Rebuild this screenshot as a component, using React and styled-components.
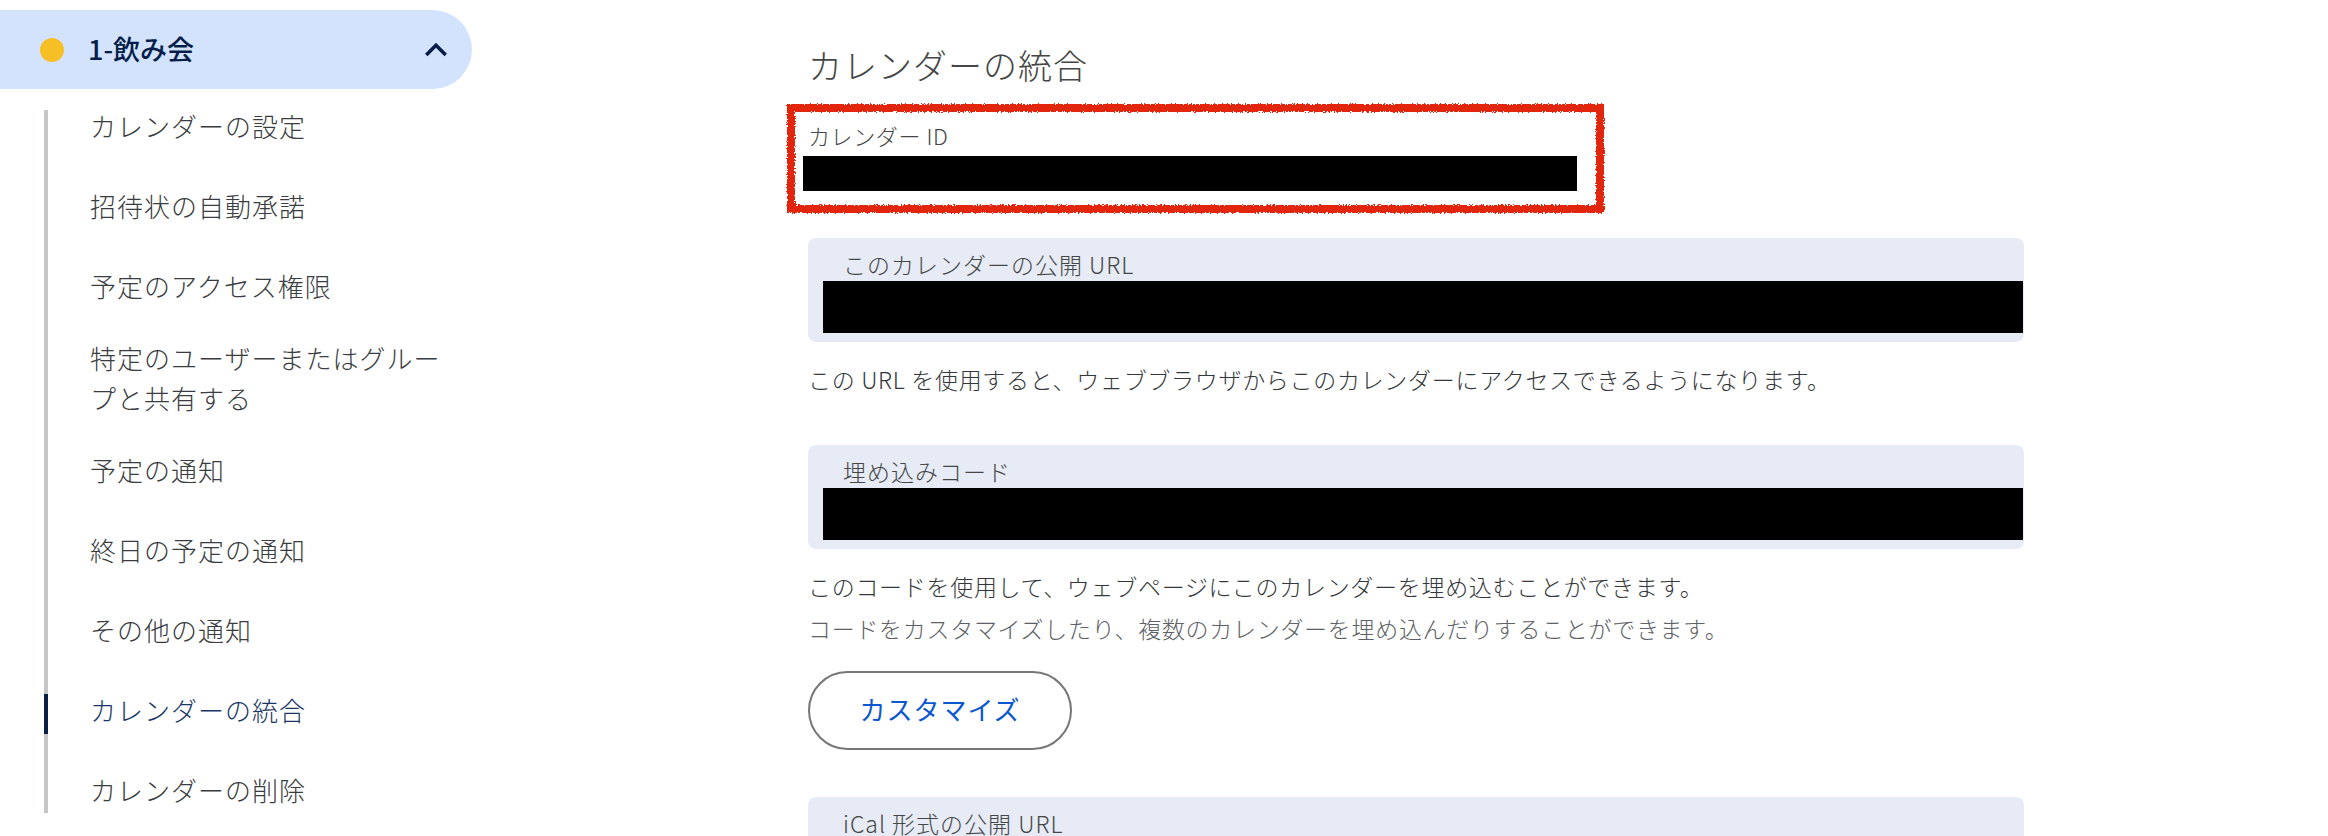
import React from "react";
import styled, { createGlobalStyle, css } from "styled-components";

const GlobalStyle = createGlobalStyle`
  html, body { margin: 0; padding: 0; background: #ffffff; overflow: hidden; }
  body {
    font-family: "Noto Sans CJK JP", "Noto Sans", sans-serif;
    -webkit-font-smoothing: antialiased;
  }
`;

const Page = styled.div`
  display: flex;
  align-items: flex-start;
  height: 836px;
  overflow: hidden;
`;

const Sidebar = styled.nav`
  width: 472px;
  flex-shrink: 0;
  padding-top: 10px;
  box-sizing: border-box;
`;

const CalendarPill = styled.div`
  height: 79px;
  display: flex;
  align-items: center;
  padding: 0 14px 2px 40px;
  background: #d3e3fd;
  border-radius: 0 40px 40px 0;
  box-sizing: border-box;
`;

const ColorDot = styled.span`
  width: 24px;
  height: 24px;
  margin-top: 2px;
  border-radius: 50%;
  background: ${(p) => p.$color};
  flex-shrink: 0;
`;

const PillTitle = styled.span`
  margin-left: 24px;
  flex: 1;
  font-size: 27px;
  font-weight: 500;
  line-height: 40px;
  color: #041e49;
`;

const ChevronSvg = styled.svg`
  width: 44px;
  height: 44px;
  margin-top: 2px;
  flex-shrink: 0;
  fill: #041e49;
`;

const NavList = styled.ul`
  list-style: none;
  margin: 0;
  padding: 0;
  position: relative;
  &::before {
    content: "";
    position: absolute;
    left: 44px;
    top: 21px;
    bottom: 20px;
    width: 4px;
    background: #c4c7c5;
  }
`;

const NavItem = styled.li`
  position: relative;
  min-height: 80px;
  box-sizing: border-box;
  padding: 9px 12px 15px 90px;
  display: flex;
  align-items: center;
  font-size: 26px;
  font-weight: 300;
  letter-spacing: 1px;
  line-height: 40px;
  color: ${(p) => (p.$active ? "#1b3766" : "#3a3d40")};
  ${(p) =>
    p.$active &&
    css`
      &::before {
        content: "";
        position: absolute;
        left: 44px;
        top: 21px;
        width: 4px;
        height: 40px;
        background: #0c1f47;
      }
    `}
`;

const Main = styled.main`
  margin-left: 336px;
  width: 1216px;
  flex-shrink: 0;
  padding-top: 43px;
`;

const Heading = styled.h2`
  margin: 0;
  font-size: 34px;
  letter-spacing: 1px;
  font-weight: 300;
  line-height: 44px;
  color: #444746;
`;

const IdField = styled.div`
  position: relative;
  margin-top: 32px;
  width: 770px;
`;

const FieldLabel = styled.div`
  font-size: 22px;
  font-weight: 300;
  letter-spacing: 0.6px;
  line-height: 32px;
  color: #444746;
`;

const Redacted = styled.div`
  background: #000000;
  height: ${(p) => p.$h}px;
  ${(p) => p.$w && css`width: ${p.$w}px;`}
  ${(p) => p.$offset && css`margin-left: ${p.$offset}px;`}
  ${(p) => p.$mt && css`margin-top: ${p.$mt}px;`}
`;

const Annotation = styled.svg`
  position: absolute;
  left: -21px;
  top: -15px;
  width: 817px;
  height: 109px;
  overflow: visible;
  pointer-events: none;
`;

const UrlBox = styled.div`
  margin-top: ${(p) => p.$mt}px;
  background: #e7ebf6;
  border-radius: 8px;
  padding: 11px 1px 9px 15px;
`;

const BoxLabel = styled.div`
  padding-left: 20px;
  margin-bottom: 2px;
  font-size: 23px;
  font-weight: 300;
  letter-spacing: 1px;
  line-height: 30px;
  color: #444746;
`;

const Description = styled.p`
  margin: ${(p) => p.$mt}px 0 0;
  font-size: 23px;
  font-weight: 300;
  letter-spacing: 0.7px;
  line-height: 42px;
  color: ${(p) => (p.$muted ? "#5e6266" : "#35383b")};
`;

const OutlineButton = styled.button`
  margin-top: 22px;
  width: 264px;
  height: 79px;
  border: 2px solid #747775;
  border-radius: 40px;
  background: #ffffff;
  color: #0b57d0;
  font-family: inherit;
  font-size: 26px;
  font-weight: 400;
  letter-spacing: 1px;
  display: flex;
  align-items: center;
  justify-content: center;
  padding: 0 0 4px;
  cursor: pointer;
`;

const navItems = [
  { label: "カレンダーの設定" },
  { label: "招待状の自動承諾" },
  { label: "予定のアクセス権限" },
  { label: "特定のユーザーまたはグループと共有する" },
  { label: "予定の通知" },
  { label: "終日の予定の通知" },
  { label: "その他の通知" },
  { label: "カレンダーの統合", active: true },
  { label: "カレンダーの削除" },
];

export default function App() {
  return (
    <>
      <GlobalStyle />
      <Page>
        <Sidebar>
          <CalendarPill>
            <ColorDot $color="#f6bf26" />
            <PillTitle>1-飲み会</PillTitle>
            <ChevronSvg viewBox="0 0 24 24">
              <path d="M12 8l-6 6 1.41 1.41L12 10.83l4.59 4.58L18 14z" />
            </ChevronSvg>
          </CalendarPill>
          <NavList>
            {navItems.map((it) => (
              <NavItem key={it.label} $active={it.active}>
                {it.label}
              </NavItem>
            ))}
          </NavList>
        </Sidebar>

        <Main>
          <Heading>カレンダーの統合</Heading>

          <IdField>
            <FieldLabel>カレンダー ID</FieldLabel>
            <Redacted $h={35} $w={774} $offset={-5} $mt={5} />
            <Annotation viewBox="0 0 817 109">
              <defs>
                <filter id="rough" x="-5%" y="-20%" width="110%" height="140%">
                  <feTurbulence type="fractalNoise" baseFrequency="0.7" numOctaves="2" seed="3" />
                  <feDisplacementMap in="SourceGraphic" scale="4" />
                </filter>
              </defs>
              <rect
                x="4"
                y="4"
                width="809"
                height="101"
                fill="none"
                stroke="#e2280c"
                strokeWidth="8"
                filter="url(#rough)"
              />
            </Annotation>
          </IdField>

          <UrlBox $mt={47}>
            <BoxLabel>このカレンダーの公開 URL</BoxLabel>
            <Redacted $h={52} />
          </UrlBox>
          <Description $mt={16}>
            この URL を使用すると、ウェブブラウザからこのカレンダーにアクセスできるようになります。
          </Description>

          <UrlBox $mt={45}>
            <BoxLabel>埋め込みコード</BoxLabel>
            <Redacted $h={52} />
          </UrlBox>
          <Description $mt={16}>
            このコードを使用して、ウェブページにこのカレンダーを埋め込むことができます。
          </Description>
          <Description $mt={0} $muted>
            コードをカスタマイズしたり、複数のカレンダーを埋め込んだりすることができます。
          </Description>
          <OutlineButton>カスタマイズ</OutlineButton>

          <UrlBox $mt={47}>
            <BoxLabel>iCal 形式の公開 URL</BoxLabel>
            <Redacted $h={52} />
          </UrlBox>
        </Main>
      </Page>
    </>
  );
}
